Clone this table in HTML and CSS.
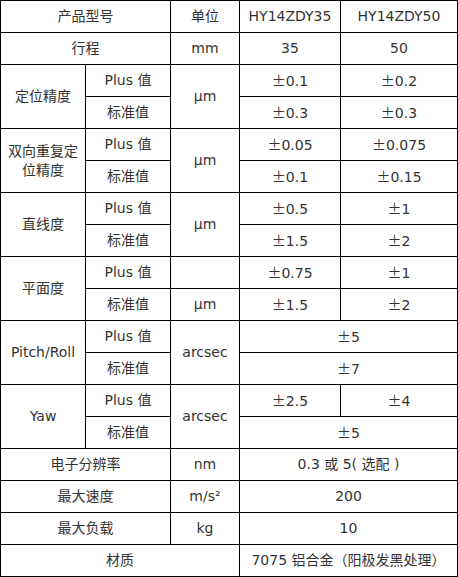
FILE: index.html
```html
<!DOCTYPE html>
<html>
<head>
<meta charset="utf-8">
<link rel="stylesheet" href="styles.css">
</head>
<body>
<table class="spec">
  <colgroup>
    <col class="c1"><col class="c2"><col class="c3"><col class="c4"><col class="c5">
  </colgroup>
  <tr><td colspan="2">产品型号</td><td>单位</td><td>HY14ZDY35</td><td>HY14ZDY50</td></tr>
  <tr><td colspan="2">行程</td><td>mm</td><td>35</td><td>50</td></tr>
  <tr><td rowspan="2">定位精度</td><td>Plus 值</td><td rowspan="2">μm</td><td><span class="pm">±</span>0.1</td><td><span class="pm">±</span>0.2</td></tr>
  <tr><td>标准值</td><td><span class="pm">±</span>0.3</td><td><span class="pm">±</span>0.3</td></tr>
  <tr><td rowspan="2" class="wrap">双向重复定位精度</td><td>Plus 值</td><td rowspan="2">μm</td><td><span class="pm">±</span>0.05</td><td><span class="pm">±</span>0.075</td></tr>
  <tr><td>标准值</td><td><span class="pm">±</span>0.1</td><td><span class="pm">±</span>0.15</td></tr>
  <tr><td rowspan="2">直线度</td><td>Plus 值</td><td rowspan="2">μm</td><td><span class="pm">±</span>0.5</td><td><span class="pm">±</span>1</td></tr>
  <tr><td>标准值</td><td><span class="pm">±</span>1.5</td><td><span class="pm">±</span>2</td></tr>
  <tr><td rowspan="2">平面度</td><td>Plus 值</td><td></td><td><span class="pm">±</span>0.75</td><td><span class="pm">±</span>1</td></tr>
  <tr><td>标准值</td><td>μm</td><td><span class="pm">±</span>1.5</td><td><span class="pm">±</span>2</td></tr>
  <tr><td rowspan="2">Pitch/Roll</td><td>Plus 值</td><td rowspan="2">arcsec</td><td colspan="2"><span class="pm">±</span>5</td></tr>
  <tr><td>标准值</td><td colspan="2"><span class="pm">±</span>7</td></tr>
  <tr><td rowspan="2">Yaw</td><td>Plus 值</td><td rowspan="2">arcsec</td><td><span class="pm">±</span>2.5</td><td><span class="pm">±</span>4</td></tr>
  <tr><td>标准值</td><td colspan="2"><span class="pm">±</span>5</td></tr>
  <tr><td colspan="2">电子分辨率</td><td>nm</td><td colspan="2">0.3 或 5( 选配 )</td></tr>
  <tr><td colspan="2">最大速度</td><td>m/s²</td><td colspan="2">200</td></tr>
  <tr><td colspan="2">最大负载</td><td>kg</td><td colspan="2">10</td></tr>
  <tr><td colspan="3">材质</td><td colspan="2">7075 铝合金（阳极发黑处理）</td></tr>
</table>
</body>
</html>
```
FILE: styles.css
```css
html, body {
  margin: 0;
  padding: 0;
  background: #ffffff;
}
.spec {
  border-collapse: collapse;
  table-layout: fixed;
  width: 457px;
  font-family: "DejaVu Sans", "Noto Sans CJK SC", sans-serif;
  font-size: 14px;
  color: #333333;
}
.c1 { width: 85px; }
.c2 { width: 85px; }
.c3 { width: 69px; }
.c4 { width: 101px; }
.c5 { width: 117px; }
.spec td {
  border: 1px solid #000;
  height: 31px;
  padding: 0 2px;
  text-align: center;
  vertical-align: middle;
  line-height: 19px;
  white-space: nowrap;
}
.spec td.wrap {
  white-space: normal;
}
.pm {
  font-family: "Noto Sans CJK SC", sans-serif;
}
```
